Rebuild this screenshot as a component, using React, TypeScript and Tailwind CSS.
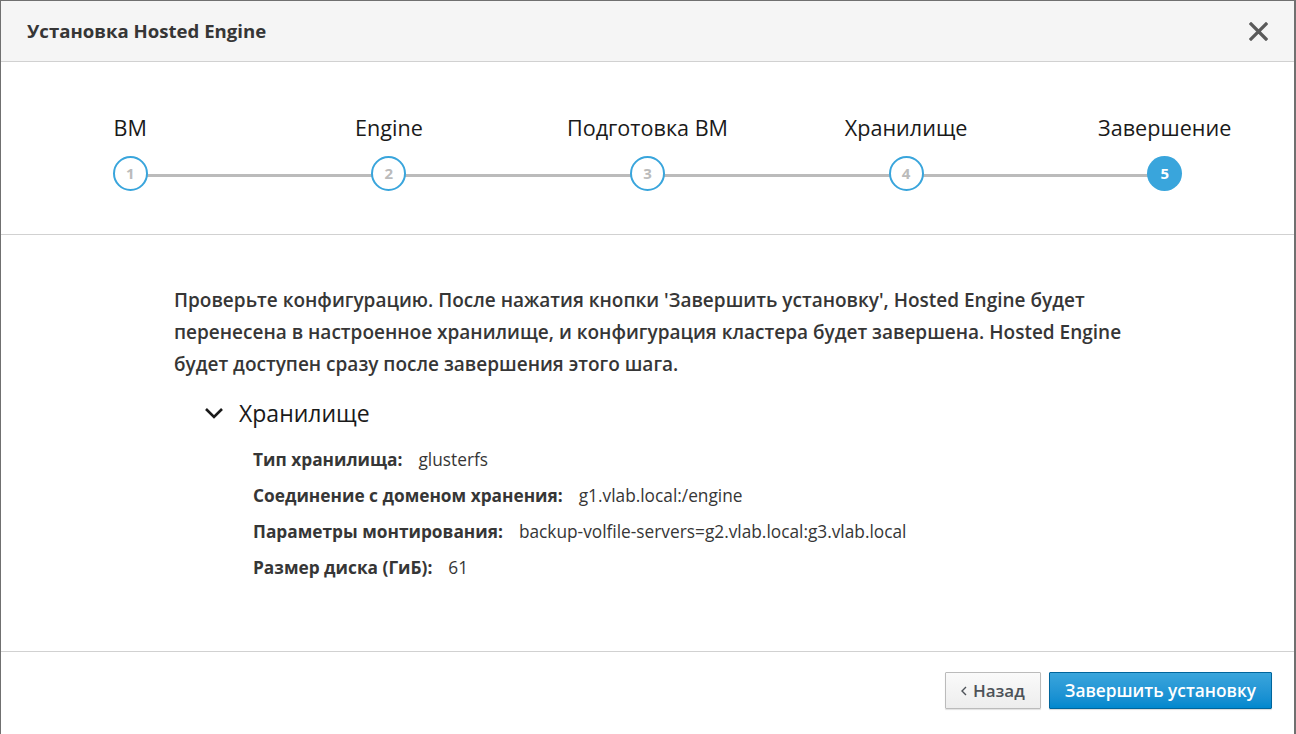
const steps = [
  { n: 1, label: 'ВМ' },
  { n: 2, label: 'Engine' },
  { n: 3, label: 'Подготовка ВМ' },
  { n: 4, label: 'Хранилище' },
  { n: 5, label: 'Завершение' },
]

const current = 5

const details = [
  { label: 'Тип хранилища:', value: 'glusterfs' },
  { label: 'Соединение с доменом хранения:', value: 'g1.vlab.local:/engine' },
  { label: 'Параметры монтирования:', value: 'backup-volfile-servers=g2.vlab.local:g3.vlab.local' },
  { label: 'Размер диска (ГиБ):', value: '61' },
]

function StepIndicator() {
  return (
    <div className="relative grid grid-cols-5 pt-[51px] pb-[43px] border-b border-[#d1d1d1]">
      {/* connecting line between first and last circle */}
      <div className="absolute left-[129px] right-[130px] top-[112px] h-[3px] bg-[#bbbbbb]" />
      {steps.map((s) => (
        <div key={s.n} className="relative flex flex-col items-center">
          <div className="text-[21.6px] leading-[30px] text-[#1a1a1a] whitespace-nowrap">{s.label}</div>
          {s.n === current ? (
            <div className="mt-[13px] w-[35px] h-[35px] rounded-full bg-[#39a5dc] flex items-center justify-center text-white text-[15px] font-bold">
              {s.n}
            </div>
          ) : (
            <div className="mt-[13px] w-[35px] h-[35px] rounded-full bg-white border-2 border-[#39a5dc] flex items-center justify-center text-[#bbbbbb] text-[15px] font-bold">
              {s.n}
            </div>
          )}
        </div>
      ))}
    </div>
  )
}

export default function App() {
  return (
    <div
      className="w-[1296px] h-[734px] bg-white border-l border-t border-r-2 border-[#707070] flex flex-col overflow-hidden"
      style={{ fontFamily: '"Open Sans", "Noto Sans", sans-serif' }}
    >
      <div className="h-[61px] shrink-0 bg-[#f5f5f5] border-b border-[#d1d1d1] flex items-center justify-between pl-[26px] pr-[26px]">
        <h1 className="text-[18.6px] font-bold text-[#363636]">Установка Hosted Engine</h1>
        <svg width="19" height="19" viewBox="0 0 19 19" className="text-[#5a5a5a]">
          <path d="M2 2 L17 17 M17 2 L2 17" stroke="currentColor" strokeWidth="3.2" strokeLinecap="square" />
        </svg>
      </div>

      <StepIndicator />

      <div className="flex-1 pl-[173px] pt-[49px]">
        <p className="max-w-[958px] text-[19px] leading-[32px] font-semibold text-[#363636]">
          Проверьте конфигурацию. После нажатия кнопки 'Завершить установку', Hosted Engine будет
          перенесена в настроенное хранилище, и конфигурация кластера будет завершена. Hosted Engine
          будет доступен сразу после завершения этого шага.
        </p>
        <div className="mt-[16px] ml-[30px] flex items-center gap-[15px]">
          <svg width="20" height="12" viewBox="0 0 20 12" className="text-[#1a1a1a]">
            <path d="M2 2 L10 10 L18 2" fill="none" stroke="currentColor" strokeWidth="2.6" />
          </svg>
          <span className="text-[23px] text-[#1a1a1a]">Хранилище</span>
        </div>
        <div className="mt-[17px] ml-[79px] flex flex-col gap-[13px]">
          {details.map((d) => (
            <div key={d.label} className="flex items-center gap-[16px] text-[17.3px] leading-[23px] text-[#363636]">
              <span className="font-bold">{d.label}</span>
              <span>{d.value}</span>
            </div>
          ))}
        </div>
      </div>

      <div className="h-[83px] shrink-0 border-t border-[#d1d1d1] flex items-start justify-end gap-[8px] pt-[20px] pr-[22px]">
        <button className="h-[37px] px-[15px] flex items-center gap-[6px] rounded-[1px] border border-[#bbbbbb] bg-gradient-to-b from-[#fafafa] to-[#ededed] text-[17px] font-semibold text-[#4d5258] shadow-[0_1px_1px_rgba(0,0,0,0.12)]">
          <svg width="6" height="10" viewBox="0 0 6 10">
            <path d="M5 1 L1 5 L5 9" fill="none" stroke="currentColor" strokeWidth="1.4" />
          </svg>
          Назад
        </button>
        <button className="h-[37px] px-[15px] rounded-[1px] border border-[#00659c] bg-gradient-to-b from-[#39a5dc] to-[#0088ce] text-[17.3px] font-semibold text-white shadow-[0_1px_1px_rgba(0,0,0,0.15)]">
          Завершить установку
        </button>
      </div>
    </div>
  )
}
